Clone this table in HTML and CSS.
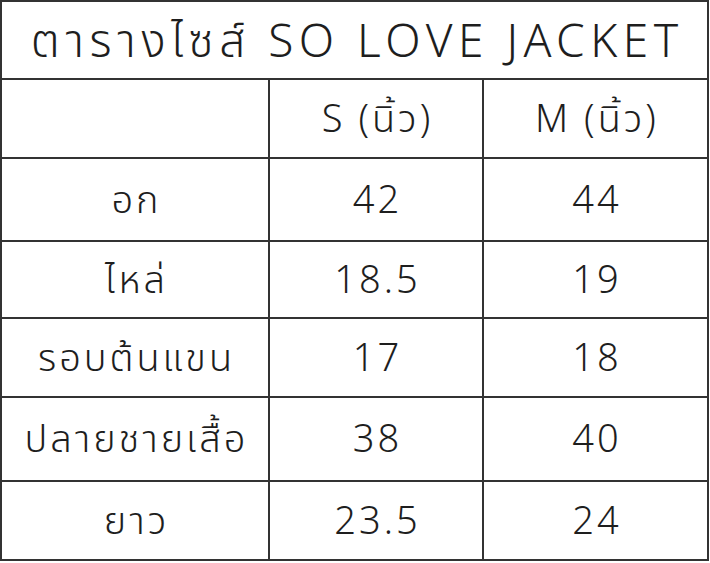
FILE: index.html
```html
<!DOCTYPE html>
<html lang="th">
<head>
<meta charset="utf-8">
<title>ตารางไซส์ SO LOVE JACKET</title>
<link rel="stylesheet" href="styles.css">
</head>
<body>
<div class="sheet">
  <div class="cell title">ตารางไซส์ SO LOVE JACKET</div>

  <div class="cell r-head"></div>
  <div class="cell r-head">S (นิ้ว)</div>
  <div class="cell r-head">M (นิ้ว)</div>

  <div class="cell r1">อก</div>
  <div class="cell r1">42</div>
  <div class="cell r1">44</div>

  <div class="cell r2">ไหล่</div>
  <div class="cell r2">18.5</div>
  <div class="cell r2">19</div>

  <div class="cell r3">รอบต้นแขน</div>
  <div class="cell r3">17</div>
  <div class="cell r3">18</div>

  <div class="cell r4">ปลายชายเสื้อ</div>
  <div class="cell r4">38</div>
  <div class="cell r4">40</div>

  <div class="cell r5">ยาว</div>
  <div class="cell r5">23.5</div>
  <div class="cell r5">24</div>
</div>
</body>
</html>
```
FILE: styles.css
```css
html, body {
  margin: 0;
  padding: 0;
  background: #ffffff;
}

.sheet {
  width: 707px;
  display: grid;
  grid-template-columns: 268px 214px 225px;
  grid-template-rows: 78px 79px 83px 77px 79px 84px 79px;
  border-top: 2px solid #333333;
  border-left: 2px solid #333333;
  font-family: "Noto Sans Thai", "Noto Sans", "DejaVu Sans", sans-serif;
  font-weight: 300;
  color: #1e1e1e;
}

.cell {
  display: flex;
  align-items: center;
  justify-content: center;
  border-right: 2px solid #333333;
  border-bottom: 2px solid #333333;
  font-size: 38px;
  line-height: 1;
  letter-spacing: 3px;
  padding-left: 3px;
  padding-top: 4px;
  white-space: nowrap;
}

.title {
  grid-column: 1 / 4;
  font-size: 46px;
  letter-spacing: 5.5px;
  padding-left: 5.5px;
  padding-top: 6px;
}
```
